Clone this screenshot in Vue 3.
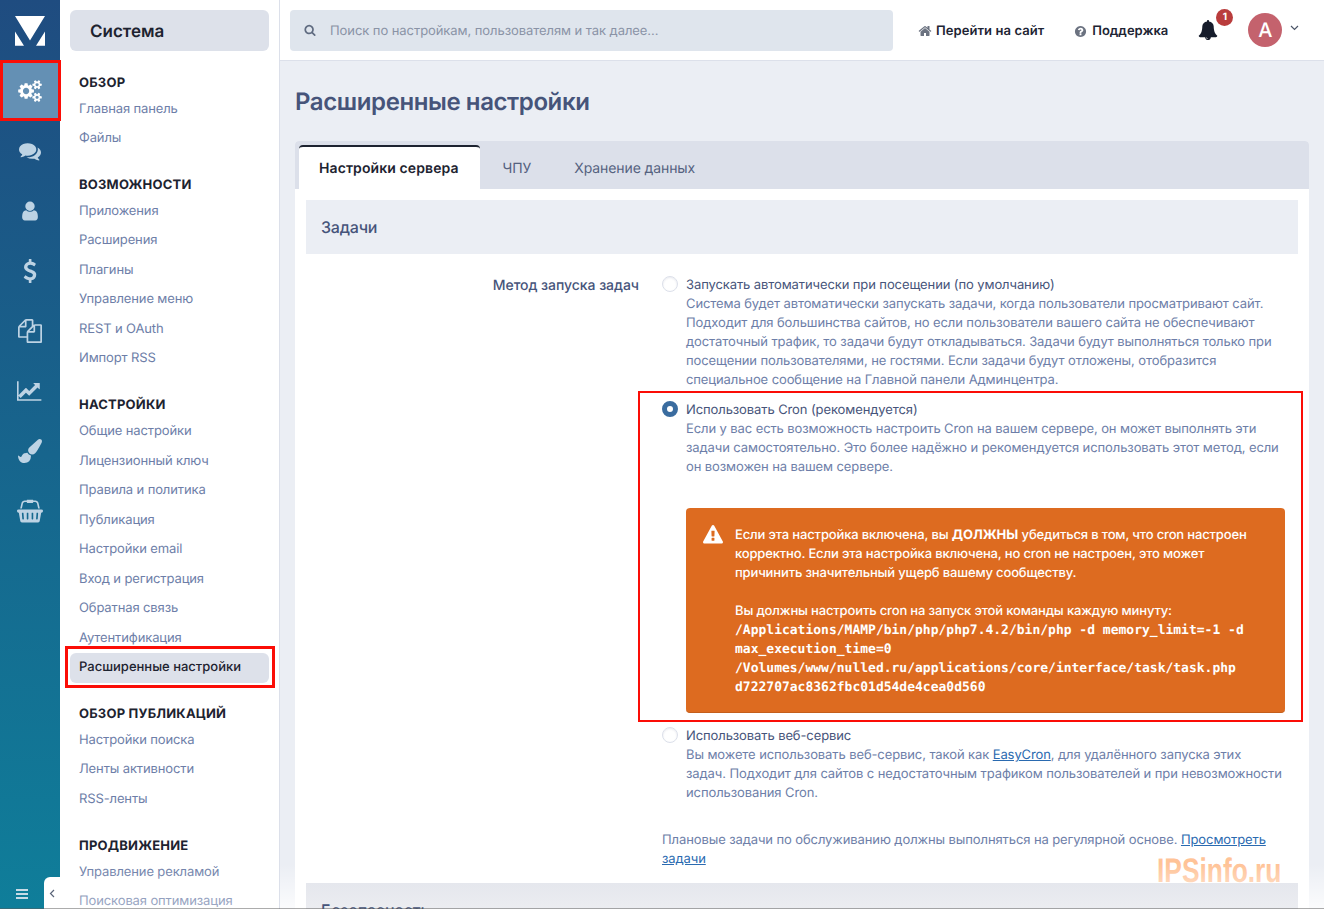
<template>
  <div class="page">
    <aside class="rail">
      <a class="logo" href="#">
        <svg width="30" height="30" viewBox="0 0 30 30"><path fill="#fff" d="M0 0h30L15 24.500zM0 15.500 9 29.700H0zM30 15.500 21 29.700h9z" /></svg>
      </a>
      <a v-for="item in railIcons" :key="item.name" class="rail-item" :class="{ on: item.active }" href="#">
        <svg :width="item.w" :height="item.h" :viewBox="item.box"><path fill="currentColor" :d="item.d" /></svg>
      </a>
      <div class="rail-bottom">
        <span class="burger"><i></i><i></i><i></i></span>
        <span class="collapse">
          <svg width="6" height="9" viewBox="0 0 6 9"><path d="M5 1 1.500 4.500 5 8" fill="none" stroke="#5a6478" stroke-width="1.200" /></svg>
        </span>
      </div>
    </aside>

    <nav class="side">
      <div class="side-title">Система</div>
      <section v-for="group in menu" :key="group.title" class="group">
        <h4>{{ group.title }}</h4>
        <a v-for="link in group.links" :key="link" href="#" class="link" :class="{ active: link === 'Расширенные настройки' }">{{ link }}</a>
      </section>
    </nav>

    <div class="main">
      <header class="top">
        <div class="search">
          <svg width="12" height="12" viewBox="0 0 1792 1792"><path fill="#5f6b80" :d="icons.search" /></svg>
          <span>Поиск по настройкам, пользователям и так далее...</span>
        </div>
        <a class="top-link site" href="#">
          <svg width="14" height="14" viewBox="0 0 1792 1792"><path fill="#6b7280" :d="icons.home" /></svg>
          Перейти на сайт
        </a>
        <a class="top-link help" href="#">
          <svg width="13" height="13" viewBox="0 0 1792 1792"><path fill="#6b7280" :d="icons.question" /></svg>
          Поддержка
        </a>
        <div class="bell">
          <svg width="20" height="20" viewBox="0 0 1792 1792"><path fill="#161c2b" :d="icons.bell" /></svg>
          <span class="badge">1</span>
        </div>
        <div class="avatar">A</div>
        <svg class="caret" width="9" height="6" viewBox="0 0 9 6"><path d="M1 1l3.500 3.500L8 1" fill="none" stroke="#4b5568" stroke-width="1.200" /></svg>
      </header>

      <div class="content">
        <h1>Расширенные настройки</h1>
        <div class="card">
          <div class="tabs">
            <a class="tab current" href="#">Настройки сервера</a>
            <a class="tab" href="#">ЧПУ</a>
            <a class="tab" href="#">Хранение данных</a>
          </div>
          <div class="card-body">
            <h2 class="band">Задачи</h2>
            <div class="row">
              <label class="row-label">Метод запуска задач</label>
              <div class="row-field">
                <div class="option">
                  <span class="radio"></span>
                  <div>
                    <div class="opt-title">Запускать автоматически при посещении (по умолчанию)</div>
                    <p class="opt-desc">Система будет автоматически запускать задачи, когда пользователи просматривают сайт. Подходит для большинства сайтов, но если пользователи вашего сайта не обеспечивают достаточный трафик, то задачи будут откладываться. Задачи будут выполняться только при посещении пользователями, не гостями. Если задачи будут отложены, отобразится специальное сообщение на Главной панели Админцентра.</p>
                  </div>
                </div>
                <div class="option">
                  <span class="radio checked"></span>
                  <div>
                    <div class="opt-title">Использовать Cron (рекомендуется)</div>
                    <p class="opt-desc">Если у вас есть возможность настроить Cron на вашем сервере, он может выполнять эти задачи самостоятельно. Это более надёжно и рекомендуется использовать этот метод, если он возможен на вашем сервере.</p>
                    <div class="warn">
                      <svg width="20" height="20" viewBox="0 0 1792 1792"><path fill="#fff" :d="icons.warning" /></svg>
                      <div class="warn-text">
                        Если эта настройка включена, вы <strong>ДОЛЖНЫ</strong> убедиться в том, что cron настроен корректно. Если эта настройка включена, но cron не настроен, это может причинить значительный ущерб вашему сообществу.
                        <br><br>
                        Вы должны настроить cron на запуск этой команды каждую минуту:<br>
                        <code>/Applications/MAMP/bin/php/php7.4.2/bin/php -d memory_limit=-1 -d max_execution_time=0 /Volumes/www/nulled.ru/applications/core/interface/task/task.php d722707ac8362fbc01d54de4cea0d560</code>
                      </div>
                    </div>
                  </div>
                </div>
                <div class="option">
                  <span class="radio"></span>
                  <div>
                    <div class="opt-title">Использовать веб-сервис</div>
                    <p class="opt-desc">Вы можете использовать веб-сервис, такой как <a href="#">EasyCron</a>, для удалённого запуска этих задач. Подходит для сайтов с недостаточным трафиком пользователей и при невозможности использования Cron.</p>
                  </div>
                </div>
                <p class="note">Плановые задачи по обслуживанию должны выполняться на регулярной основе. <a href="#">Просмотреть задачи</a></p>
              </div>
            </div>
            <h2 class="band next">Безопасность</h2>
          </div>
        </div>
      </div>
    </div>

    <div class="fade side-fade"></div>
    <div class="fade main-fade"></div>
    <div class="mark mark-gear"></div>
    <div class="mark mark-link"></div>
    <div class="mark mark-cron"></div>
    <div class="watermark">IPSinfo.ru</div>
  </div>
</template>

<script setup>
const icons = {
  search: 'M1216 832q0-185-131.500-316.500t-316.500-131.500-316.500 131.500-131.500 316.500 131.500 316.500 316.500 131.500 316.500-131.500 131.500-316.500zm512 832q0 52-38 90t-90 38q-54 0-90-38l-343-342q-179 124-399 124-143 0-273.500-55.500t-225-150-150-225-55.500-273.500 55.500-273.500 150-225 225-150 273.500-55.500 273.500 55.500 225 150 150 225 55.500 273.500q0 220-124 399l343 343q37 37 37 90z',
  home: 'M1472 992v480q0 26-19 45t-45 19h-384v-384h-256v384h-384q-26 0-45-19t-19-45v-480q0-1 .5-3t.5-3l575-474 575 474q1 2 1 6zm223-69l-62 74q-8 9-21 11h-3q-13 0-21-7l-692-577-692 577q-12 8-24 7-13-2-21-11l-62-74q-8-10-7-23.500t11-21.500l719-599q32-26 76-26t76 26l244 204v-195q0-14 9-23t23-9h192q14 0 23 9t9 23v408l219 182q10 8 11 21.500t-7 23.500z',
  question: 'M1024 1376v-192q0-14-9-23t-23-9h-192q-14 0-23 9t-9 23v192q0 14 9 23t23 9h192q14 0 23-9t9-23zm256-672q0-88-55.500-163t-138.500-116-170-41q-243 0-371 213-15 24 8 42l132 100q7 6 19 6 16 0 25-12 53-68 86-92 34-24 86-24 48 0 85.500 26t37.500 59q0 38-20 61t-68 45q-63 28-115.500 86.500t-52.500 125.500v36q0 14 9 23t23 9h192q14 0 23-9t9-23q0-19 21.500-49.500t54.500-49.500q32-18 49-28.500t46-35 44.500-48 28-60.500 12.500-81zm384 192q0 209-103 385.500t-279.500 279.500-385.500 103-385.500-103-279.500-279.500-103-385.500 103-385.500 279.500-279.500 385.500-103 385.500 103 279.500 279.500 103 385.500z',
  bell: 'M912 1696q0-16-16-16-59 0-101.500-42.500t-42.500-101.500q0-16-16-16t-16 16q0 73 51.500 124.500t124.500 51.500q16 0 16-16zm816-288q0 52-38 90t-90 38h-448q0 106-75 181t-181 75-181-75-75-181h-448q-52 0-90-38t-38-90q50-42 91-88t85-119.500 74.500-158.500 50-206 19.500-260q0-152 117-282.500t307-158.500q-8-19-8-39 0-40 28-68t68-28 68 28 28 68q0 20-8 39 190 28 307 158.500t117 282.500q0 139 19.500 260t50 206 74.500 158.500 85 119.500 91 88z',
  warning: 'M1024 1375v-190q0-14-9.500-23.500t-22.500-9.500h-192q-13 0-22.500 9.500t-9.500 23.500v190q0 14 9.500 23.500t22.500 9.500h192q13 0 22.500-9.500t9.500-23.500zm-2-374l18-459q0-12-10-19-13-11-24-11h-220q-11 0-24 11-10 7-10 21l17 457q0 10 10 16.500t24 6.500h185q14 0 23.500-6.500t10.500-16.500zm-14-934l768 1408q35 63-2 126-17 29-46.500 46t-63.500 17h-1536q-34 0-63.500-17t-46.500-46q-37-63-2-126l768-1408q17-31 47-49t65-18 65 18 47 49z'
}

const railIcons = [
  { name: 'system', active: true, w: 24, h: 22, box: '0 0 1920 1792', d: 'M896 896q0-106-75-181t-181-75-181 75-75 181 75 181 181 75 181-75 75-181zm768 512q0-52-38-90t-90-38-90 38-38 90q0 53 37.500 90.500t90.500 37.500 90.500-37.500 37.500-90.500zm0-1024q0-52-38-90t-90-38-90 38-38 90q0 53 37.500 90.500t90.500 37.500 90.500-37.500 37.500-90.500zm-384 421v185q0 10-7 19.500t-16 10.500l-155 24q-11 35-32 76 34 48 90 115 7 11 7 20 0 12-7 19-23 30-82.500 89.500t-78.500 59.500q-11 0-21-7l-115-90q-37 19-77 31-11 108-23 155-7 24-30 24h-186q-11 0-20-7.500t-10-17.500l-23-153q-34-10-75-31l-118 89q-7 7-20 7-11 0-21-8-144-133-144-160 0-9 7-19 10-14 41-53t47-61q-23-44-35-82l-152-24q-10-1-17-9.500t-7-19.500v-185q0-10 7-19.500t16-10.500l155-24q11-35 32-76-34-48-90-115-7-11-7-20 0-12 7-20 22-30 82-89t79-59q11 0 21 7l115 90q34-18 77-32 11-108 23-154 7-24 30-24h186q11 0 20 7.500t10 17.500l23 153q34 10 75 31l118-89q8-7 20-7 11 0 21 8 144 133 144 160 0 8-7 19-12 16-42 54t-45 60q23 48 34 82l152 23q10 2 17 10.500t7 19.500zm640 533v140q0 16-149 31-12 27-30 52 51 113 51 138 0 4-4 7-122 71-124 71-8 0-46-47t-52-68q-20 2-30 2t-30-2q-14 21-52 68t-46 47q-2 0-124-71-4-3-4-7 0-25 51-138-18-25-30-52-149-15-149-31v-140q0-16 149-31 13-29 30-52-51-113-51-138 0-4 4-7 4-2 35-20t59-34 30-16q8 0 46 46.500t52 67.500q20-2 30-2t30 2q51-71 92-112l6-2q4 0 124 70 4 3 4 7 0 25-51 138 17 23 30 52 149 15 149 31zm0-1024v140q0 16-149 31-12 27-30 52 51 113 51 138 0 4-4 7-122 71-124 71-8 0-46-47t-52-68q-20 2-30 2t-30-2q-14 21-52 68t-46 47q-2 0-124-71-4-3-4-7 0-25 51-138-18-25-30-52-149-15-149-31v-140q0-16 149-31 13-29 30-52-51-113-51-138 0-4 4-7 4-2 35-20t59-34 30-16q8 0 46 46.500t52 67.500q20-2 30-2t30 2q51-71 92-112l6-2q4 0 124 70 4 3 4 7 0 25-51 138 17 23 30 52 149 15 149 31z' },
  { name: 'community', w: 24, h: 22, box: '0 0 1792 1792', d: 'M1408 768q0 139-94 257t-256.500 186.500-353.500 68.500q-86 0-176-16-124 88-278 128-36 9-86 16h-3q-11 0-20.500-8t-11.500-21q-1-3-1-6.500t.5-6.500 2-6l2.500-5 3.500-5.500 4-5 4.500-5 4-4.500q5-6 23-25t26-29.500 22.500-29 25-38.500 20.500-44q-124-72-195-177t-71-224q0-139 94-257t256.500-186.500 353.500-68.500 353.500 68.500 256.500 186.500 94 257zm384 256q0 120-71 224.500t-195 176.500q10 24 20.500 44t25 38.500 22.500 29 26 29.500 23 25q1 1 4 4.500t4.500 5 4 5 3.500 5.500l2.500 5 2 6 .5 6.500-1 6.500q-3 14-13 22t-22 7q-50-7-86-16-154-40-278-128-90 16-176 16-271 0-472-132 58 4 88 4 161 0 309-45t264-129q125-92 192-212t67-254q0-77-23-152 129 71 204 178t75 230z' },
  { name: 'members', w: 22, h: 24, box: '0 0 1792 1792', d: 'M1536 1399q0 109-62.500 187t-150.500 78h-854q-88 0-150.500-78t-62.500-187q0-85 8.500-160.500t31.500-152 58.500-131 94-89 134.500-34.500q131 128 313 128t313-128q76 0 134.500 34.500t94 89 58.500 131 31.500 152 8.500 160.500zm-256-887q0 159-112.500 271.500t-271.500 112.500-271.500-112.500-112.500-271.500 112.500-271.500 271.500-112.500 271.500 112.500 112.500 271.500z' },
  { name: 'commerce', w: 24, h: 24, box: '0 0 1792 1792', d: 'M1362 1185q0 153-99.500 263.500t-258.500 136.500v175q0 14-9 23t-23 9h-135q-13 0-22.500-9.500t-9.500-22.500v-175q-66-9-127.500-31t-101.500-44.500-74-48-46.500-37.500-17.500-18q-17-21-2-41l103-135q7-10 23-12 15-2 24 9l2 2q113 99 243 125 37 8 74 8 81 0 142.500-43t61.500-122q0-28-15-53t-33.500-42-58.500-37.500-66-32-80-32.500q-39-16-61.500-25t-61.500-26.500-62.500-31-56.500-35.500-53.500-42.500-43.500-49-35.500-58-21-66.500-8.500-78q0-138 98-242t255-134v-180q0-13 9.500-22.500t22.500-9.500h135q14 0 23 9t9 23v176q57 6 110.500 23t87 33.500 63.500 37.500 39 29 15 14q17 18 5 38l-81 146q-8 15-23 16-14 3-27-7-3-3-14.500-12t-39-26.500-58.500-32-74.500-26-85.500-11.500q-95 0-155 43t-60 111q0 26 8.500 48t29.500 41.500 39.500 33 56 31 60.500 27 70 27.500q53 20 81 31.500t76 35 75.500 42.500 62 50 53 63.500 31.500 76.500 13 94z' },
  { name: 'content', w: 24, h: 24, box: '0 0 1792 1792', d: 'M1696 384q40 0 68 28t28 68v1216q0 40-28 68t-68 28h-960q-40 0-68-28t-28-68v-288h-544q-40 0-68-28t-28-68v-672q0-40 20-88t48-76l408-408q28-28 76-48t88-20h416q40 0 68 28t28 68v328q68-40 128-40h416zm-544 213l-299 299h299v-299zm-640-384l-299 299h299v-299zm196 647l316-316v-416h-384v416q0 40-28 68t-68 28h-416v640h512v-256q0-40 20-88t48-76zm956 804v-1152h-384v416q0 40-28 68t-68 28h-416v640h896z' },
  { name: 'stats', w: 26, h: 24, box: '0 0 2048 1792', d: 'M1920 1536v128h-1920v-1536h128v1408h1792zm-128-1248v435q0 21-19.500 29.500t-35.500-7.500l-121-121-633 633q-10 10-23 10t-23-10l-233-233-416 416-192-192 585-585q10-10 23-10t23 10l233 233 464-464-121-121q-16-16-7.500-35.500t29.500-19.500h435q14 0 23 9t9 23z' },
  { name: 'themes', w: 24, h: 24, box: '0 0 1792 1792', d: 'M1615 0q70 0 122.500 46.500t52.500 116.500q0 63-45 151-332 629-465 752-97 91-218 91-126 0-216.500-92.500t-90.500-219.500q0-128 92-212l638-579q59-54 130-54zm-909 1034q39 76 106.500 130t150.500 76l1 71q4 213-129.500 347t-348.500 134q-123 0-218-46.500t-152.500-127.500-86.500-183-29-220q7 5 41 30t62 44.500 59 36.500 46 17q41 0 55-37 25-66 57.500-112.500t69.500-76 88-47.500 103-25.500 125-10.500z' },
  { name: 'store', w: 26, h: 24, box: '0 0 2048 1792', d: 'M1920 768q53 0 90.500 37.500t37.500 90.500-37.500 90.500-90.500 37.500h-15l-115 662q-8 46-44 76t-82 30h-1280q-46 0-82-30t-44-76l-115-662h-15q-53 0-90.500-37.500t-37.500-90.500 37.500-90.500 90.500-37.500h1792zm-1435 800q26-2 43.500-22.500t15.500-46.500l-32-416q-2-26-22.500-43.500t-46.500-15.500-43.500 22.500-15.500 46.500l32 416q2 25 20.500 42t43.500 17h5zm411-64v-416q0-26-19-45t-45-19-45 19-19 45v416q0 26 19 45t45 19 45-19 19-45zm384 0v-416q0-26-19-45t-45-19-45 19-19 45v416q0 26 19 45t45 19 45-19 19-45zm352 5l32-416q2-26-15.500-46.500t-43.500-22.500-46.500 15.500-22.500 43.500l-32 416q-2 26 15.500 46.500t43.500 22.500h5q25 0 43.500-17t20.500-42zm-1156-1217l-93 412h-132l101-441q19-88 89-143.500t160-55.500h167q0-26 19-45t45-19h384q26 0 45 19t19 45h167q90 0 160 55.500t89 143.500l101 441h-132l-93-412q-11-44-45.500-72t-79.500-28h-167q0 26-19 45t-45 19h-384q-26 0-45-19t-19-45h-167q-45 0-79.500 28t-45.500 72z' }
]

const menu = [
  { title: 'Обзор', links: ['Главная панель', 'Файлы'] },
  { title: 'Возможности', links: ['Приложения', 'Расширения', 'Плагины', 'Управление меню', 'REST и OAuth', 'Импорт RSS'] },
  { title: 'Настройки', links: ['Общие настройки', 'Лицензионный ключ', 'Правила и политика', 'Публикация', 'Настройки email', 'Вход и регистрация', 'Обратная связь', 'Аутентификация', 'Расширенные настройки'] },
  { title: 'Обзор публикаций', links: ['Настройки поиска', 'Ленты активности', 'RSS-ленты'] },
  { title: 'Продвижение', links: ['Управление рекламой', 'Поисковая оптимизация'] }
]
</script>

<style>
html, body { margin: 0; overflow: hidden; }
</style>

<style scoped>
.page {
  position: relative;
  display: flex;
  width: 1324px;
  height: 909px;
  overflow: hidden;
  background: #ebeef4;
  font-family: Inter, "Noto Sans", sans-serif;
  font-size: 13px;
  line-height: 19px;
  color: #46547a;
  text-rendering: geometricPrecision;
}
.page::after {
  content: "";
  position: absolute;
  z-index: 4;
  left: 0;
  right: 0;
  bottom: 0;
  height: 1px;
  background: rgba(90, 90, 90, .5);
}
a { text-decoration: none; color: inherit; }

.rail {
  position: relative;
  flex: 0 0 60px;
  background: linear-gradient(180deg, #1f4c80 0%, #0f7e9a 100%);
}
.logo { display: flex; justify-content: center; padding-top: 16px; height: 45px; }
.rail-item {
  display: flex;
  align-items: center;
  justify-content: center;
  height: 60px;
  color: #bdd3e4;
}
.rail-item.on { background: #6490b4; color: #fff; }
.rail-bottom { position: absolute; left: 0; right: 0; bottom: 0; height: 32px; }
.burger { position: absolute; left: 16px; top: 12px; width: 12px; display: flex; flex-direction: column; gap: 2px; }
.burger i { display: block; height: 2px; background: #c7dbe6; }
.collapse {
  position: absolute;
  right: 0;
  top: 0;
  width: 16px;
  height: 32px;
  display: flex;
  align-items: center;
  justify-content: center;
  background: #fff;
  border-top-left-radius: 6px;
}

.side {
  flex: 0 0 199px;
  padding: 10px 10px 0;
  width: 199px;
  background: #fff;
  border-right: 1px solid #dce0ea;
}
.side-title {
  height: 41px;
  line-height: 44px;
  padding-left: 20px;
  margin-bottom: 20.500px;
  border-radius: 6px;
  background: #dde1ea;
  color: #1d2330;
  font-size: 17px;
  font-weight: 600;
}
.group { margin-bottom: 20.250px; }
.group h4 {
  margin: 0 0 1px;
  padding-left: 9px;
  height: 22px;
  line-height: 22px;
  font-size: 13px;
  font-weight: 700;
  letter-spacing: .2px;
  text-transform: uppercase;
  color: #1d2330;
}
.link {
  display: block;
  height: 29.500px;
  line-height: 29.500px;
  padding-left: 9px;
  letter-spacing: -.12px;
  color: #6d7ea8;
  border-radius: 6px;
}
.link.active { margin-bottom: 1px; background: #dde1ea; color: #1d2330; font-weight: 500; letter-spacing: 0; }

.main { flex: 1; min-width: 0; display: flex; flex-direction: column; }
.top {
  display: flex;
  align-items: center;
  flex: 0 0 61px;
  box-sizing: border-box;
  padding-left: 10px;
  background: #fff;
  border-bottom: 1px solid #dce0ea;
}
.search {
  display: flex;
  align-items: center;
  gap: 14px;
  box-sizing: border-box;
  width: 603px;
  height: 41px;
  padding-left: 14px;
  border-radius: 4px;
  background: #dfe5ed;
  color: #8a93a6;
}
.search span { padding-top: 2px; letter-spacing: -.07px; }
.top-link {
  display: flex;
  align-items: center;
  gap: 5px;
  padding-top: 2px;
  font-weight: 600;
  color: #1d2433;
}
.site { margin-left: 25px; gap: 4px; letter-spacing: .07px; }
.help { margin-left: 30px; }
.bell { position: relative; display: flex; margin-left: 30px; }
.badge {
  position: absolute;
  left: 18px;
  top: -11px;
  width: 17px;
  height: 17px;
  line-height: 17px;
  border-radius: 50%;
  background: #b93c3c;
  color: #fff;
  font-size: 10px;
  font-weight: 700;
  text-align: center;
}
.avatar {
  margin-left: 30px;
  width: 34px;
  height: 34px;
  line-height: 34px;
  border-radius: 50%;
  background: #c4626d;
  color: #fff;
  font-size: 20px;
  font-weight: 500;
  text-align: center;
}
.caret { margin-left: 8px; margin-top: -4px; }

.content { padding: 0 15px; }
h1 {
  margin: 0;
  height: 80px;
  line-height: 81px;
  font-size: 24px;
  font-weight: 600;
  letter-spacing: -.4px;
  color: #46547a;
}
.card { background: #fff; border-radius: 4px 4px 0 0; }
.tabs {
  display: flex;
  height: 48px;
  box-sizing: border-box;
  padding: 4px 0 0 4px;
  background: #dce0ea;
  border-radius: 4px 4px 0 0;
}
.tab {
  padding: 0 21.500px;
  line-height: 48px;
  font-size: 14px;
  letter-spacing: -.1px;
  color: #55627f;
}
.tab.current {
  width: 140px;
  padding: 0 21px 0 20px;
  background: #fff;
  border-top: 2px solid #1d2330;
  border-radius: 4px 4px 0 0;
  line-height: 44px;
  letter-spacing: .1px;
  font-weight: 600;
  color: #1d2330;
  margin-right: 1px;
}
.card-body { padding: 11px 11px 0; }
.band {
  margin: 0;
  height: 54px;
  line-height: 54px;
  padding-left: 15px;
  background: #ebeef4;
  font-size: 16px;
  font-weight: 500;
  letter-spacing: -.2px;
  color: #46547a;
}
.band.next {
  position: relative;
  z-index: 3;
  margin-top: 13.500px;
  background: linear-gradient(#e5e7ed, #ecedf1 28px);
}
.row { display: flex; padding-top: 22px; }
.row-label {
  flex: 0 0 333px;
  text-align: right;
  font-size: 14px;
  font-weight: 500;
  letter-spacing: -.05px;
}
.row-field { margin-left: 23px; flex: 1; padding-right: 13px; letter-spacing: -.1px; }
.option { display: flex; gap: 8px; margin-bottom: 11px; }
.radio {
  flex: 0 0 16px;
  height: 16px;
  box-sizing: border-box;
  border: 1px solid #dce0ea;
  border-radius: 50%;
  background: #fff;
  box-shadow: inset 0 1px 2px rgba(70, 84, 122, .12);
}
.radio.checked { border: 5px solid #3a6c9f; box-shadow: none; }
.opt-title { color: #46547a; }
.opt-desc { margin: 0; max-width: 597px; color: #6d7ea8; }
.opt-desc a, .note a { color: #2a6ab0; text-decoration: underline; }
.warn {
  display: flex;
  gap: 12px;
  margin-top: 31px;
  margin-bottom: 3px;
  padding: 18px 17px 15px;
  border-radius: 4px;
  background: #dd6b20;
  border-bottom: 1px solid #c45e1b;
  color: #fff;
}
.warn svg { flex: 0 0 20px; margin-top: -1px; }
.warn-text { font-weight: 500; letter-spacing: -.15px; }
.warn-text strong { font-weight: 700; letter-spacing: 0; }
code { font-family: "DejaVu Sans Mono", monospace; font-size: 13px; font-weight: 700; letter-spacing: 0; }
.note { margin: 28px 0 0; color: #6d7ea8; }

.fade {
  position: absolute;
  z-index: 2;
  bottom: 0;
  height: 45px;
  pointer-events: none;
}
.side-fade { left: 60px; width: 219px; background: linear-gradient(rgba(255, 255, 255, 0), rgba(255, 255, 255, .35)); }
.main-fade { left: 280px; right: 0; background: linear-gradient(rgba(255, 255, 255, 0), rgba(255, 255, 255, .8)); }

.mark { position: absolute; z-index: 5; box-sizing: border-box; border: 3px solid #fb0d06; pointer-events: none; }
.mark-gear { left: 0; top: 60px; width: 61px; height: 61px; }
.mark-link { left: 65px; top: 646px; width: 210px; height: 42px; }
.mark-cron { left: 638px; top: 391px; width: 665px; height: 331px; border-width: 2px; }

.watermark {
  position: absolute;
  left: 1157px;
  top: 853px;
  font-family: "Liberation Sans", sans-serif;
  font-size: 34px;
  line-height: 36px;
  font-weight: 700;
  color: #ffc397;
  transform: scaleX(.775);
  transform-origin: left center;
  pointer-events: none;
}
</style>
